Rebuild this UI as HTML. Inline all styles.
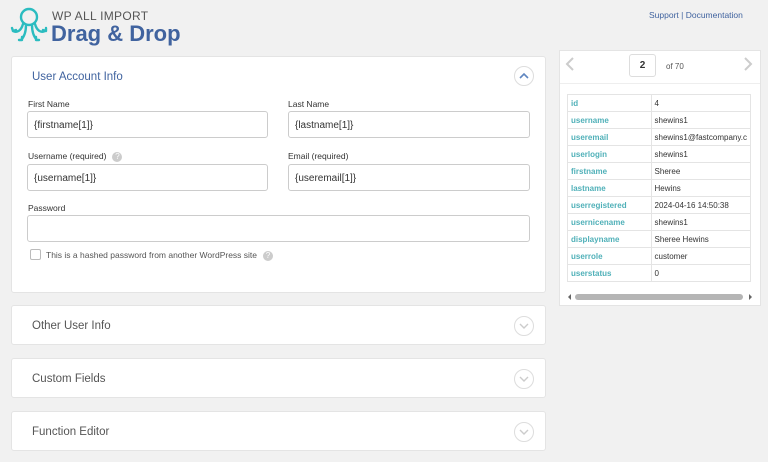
<!DOCTYPE html>
<html><head><style>
*{box-sizing:border-box;margin:0;padding:0}
body{width:768px;height:462px;background:#f1f1f1;font-family:"Liberation Sans",sans-serif;position:relative;overflow:hidden;color:#333}
.abs{position:absolute}
.panel{position:absolute;left:11px;width:535px;background:#fff;border:1px solid #e4e4e4;border-radius:3px}
.title{position:absolute;left:20px;font-size:11.5px;color:#40639f}
.circ{position:absolute;right:11px;width:20px;height:20px;border:1px solid #ddd;border-radius:50%}
.lbl{position:absolute;font-size:8.5px;color:#333}
.inp{position:absolute;height:27px;border:1px solid #ccc;border-radius:3px;background:#fff;font-size:10px;padding:8px 0 0 6px;color:#333}
.q{display:inline-block;width:10px;height:10px;border-radius:50%;background:#ccc;color:#fff;font-size:8px;text-align:center;line-height:10px;margin-left:6px;vertical-align:middle}
table{border-collapse:separate;border-spacing:1px;position:absolute;left:567px;top:94px;width:184px;background:#e4e4e4}
td{background:#fff;height:16px;font-size:8px;padding:0 3px;white-space:nowrap;overflow:hidden}
td.k{color:#4fb0b8;font-weight:bold;width:88px}
</style></head><body>
<svg class="abs" style="left:10px;top:6px" width="38" height="40" viewBox="0 0 38 40" fill="none" stroke="#2bbcc0" stroke-width="2.4" stroke-linecap="round" stroke-linejoin="round">
<circle cx="19" cy="11" r="8"/>
<path d="M13 18 C11 25 7 27 3 25 M16 19 C16 27 14 31 11 34 M22 19 C22 27 24 31 27 34 M25 18 C27 25 31 27 35 25 M2 22 l1 3 3-1 M33 24 l3 1 0-3 M9 34 h3 v-3 M29 34 h-3 v-3"/>
</svg>
<div class="abs" style="left:52px;top:9px;font-size:12px;color:#555;letter-spacing:.3px">WP ALL IMPORT</div>
<div class="abs" style="left:51px;top:21px;font-size:22px;font-weight:bold;color:#40639f">Drag &amp; Drop</div>
<div class="abs" style="left:649px;top:10px;font-size:8.5px;color:#40639f">Support | Documentation</div>

<div class="panel" style="top:56px;height:237px">
<div class="title" style="top:14px">User Account Info</div>
<div class="circ" style="top:9px"><svg width="18" height="18" viewBox="0 0 18 18"><path d="M5 11 L9 7 L13 11" stroke="#5f86c0" stroke-width="1.6" fill="none"/></svg></div>
</div>
<div class="lbl" style="left:28px;top:99px">First Name</div>
<div class="inp" style="left:27px;top:111px;width:241px">{firstname[1]}</div>
<div class="lbl" style="left:288px;top:99px">Last Name</div>
<div class="inp" style="left:288px;top:111px;width:242px">{lastname[1]}</div>
<div class="lbl" style="left:28px;top:151px">Username (required)<span class="q">?</span></div>
<div class="inp" style="left:27px;top:164px;width:241px">{username[1]}</div>
<div class="lbl" style="left:288px;top:151px">Email (required)</div>
<div class="inp" style="left:288px;top:164px;width:242px">{useremail[1]}</div>
<div class="lbl" style="left:28px;top:203px">Password</div>
<div class="inp" style="left:27px;top:215px;width:503px"></div>
<div class="abs" style="left:30px;top:249px;width:11px;height:11px;border:1px solid #bbb;border-radius:2px"></div>
<div class="lbl" style="left:46px;top:250px;color:#555">This is a hashed password from another WordPress site<span class="q">?</span></div>

<div class="panel" style="top:305px;height:40px"><div class="title" style="top:14px;color:#555">Other User Info</div><div class="circ" style="top:10px"><svg width="18" height="18" viewBox="0 0 18 18"><path d="M5 7 L9 11 L13 7" stroke="#ccc" stroke-width="1.4" fill="none"/></svg></div></div>
<div class="panel" style="top:358px;height:40px"><div class="title" style="top:14px;color:#555">Custom Fields</div><div class="circ" style="top:10px"><svg width="18" height="18" viewBox="0 0 18 18"><path d="M5 7 L9 11 L13 7" stroke="#ccc" stroke-width="1.4" fill="none"/></svg></div></div>
<div class="panel" style="top:411px;height:40px"><div class="title" style="top:14px;color:#555">Function Editor</div><div class="circ" style="top:10px"><svg width="18" height="18" viewBox="0 0 18 18"><path d="M5 7 L9 11 L13 7" stroke="#ccc" stroke-width="1.4" fill="none"/></svg></div></div>

<div class="abs" style="left:559px;top:50px;width:202px;height:256px;background:#fff;border:1px solid #e4e4e4"></div>
<div class="abs" style="left:560px;top:83px;width:200px;height:1px;background:#eee"></div>
<svg class="abs" style="left:564px;top:56px" width="12" height="16"><path d="M9 2 L3 8 L9 14" stroke="#ccc" stroke-width="2" fill="none"/></svg>
<svg class="abs" style="left:742px;top:56px" width="12" height="16"><path d="M3 2 L9 8 L3 14" stroke="#ccc" stroke-width="2" fill="none"/></svg>
<div class="abs" style="left:629px;top:54px;width:27px;height:23px;border:1px solid #ddd;border-radius:3px;text-align:center;font-size:10px;font-weight:bold;line-height:22px">2</div>
<div class="abs" style="left:666px;top:62px;font-size:8px;color:#555">of 70</div>
<table>
<tr><td class="k">id</td><td>4</td></tr>
<tr><td class="k">username</td><td>shewins1</td></tr>
<tr><td class="k">useremail</td><td>shewins1@fastcompany.c</td></tr>
<tr><td class="k">userlogin</td><td>shewins1</td></tr>
<tr><td class="k">firstname</td><td>Sheree</td></tr>
<tr><td class="k">lastname</td><td>Hewins</td></tr>
<tr><td class="k">userregistered</td><td>2024-04-16 14:50:38</td></tr>
<tr><td class="k">usernicename</td><td>shewins1</td></tr>
<tr><td class="k">displayname</td><td>Sheree Hewins</td></tr>
<tr><td class="k">userrole</td><td>customer</td></tr>
<tr><td class="k">userstatus</td><td>0</td></tr>
</table>
<div class="abs" style="left:565px;top:294px;width:0;height:0;border:3px solid transparent;border-right-color:#666"></div>
<div class="abs" style="left:575px;top:294px;width:168px;height:6px;border-radius:3px;background:#b5b5b5"></div>
<div class="abs" style="left:749px;top:294px;width:0;height:0;border:3px solid transparent;border-left-color:#666"></div>
</body></html>
